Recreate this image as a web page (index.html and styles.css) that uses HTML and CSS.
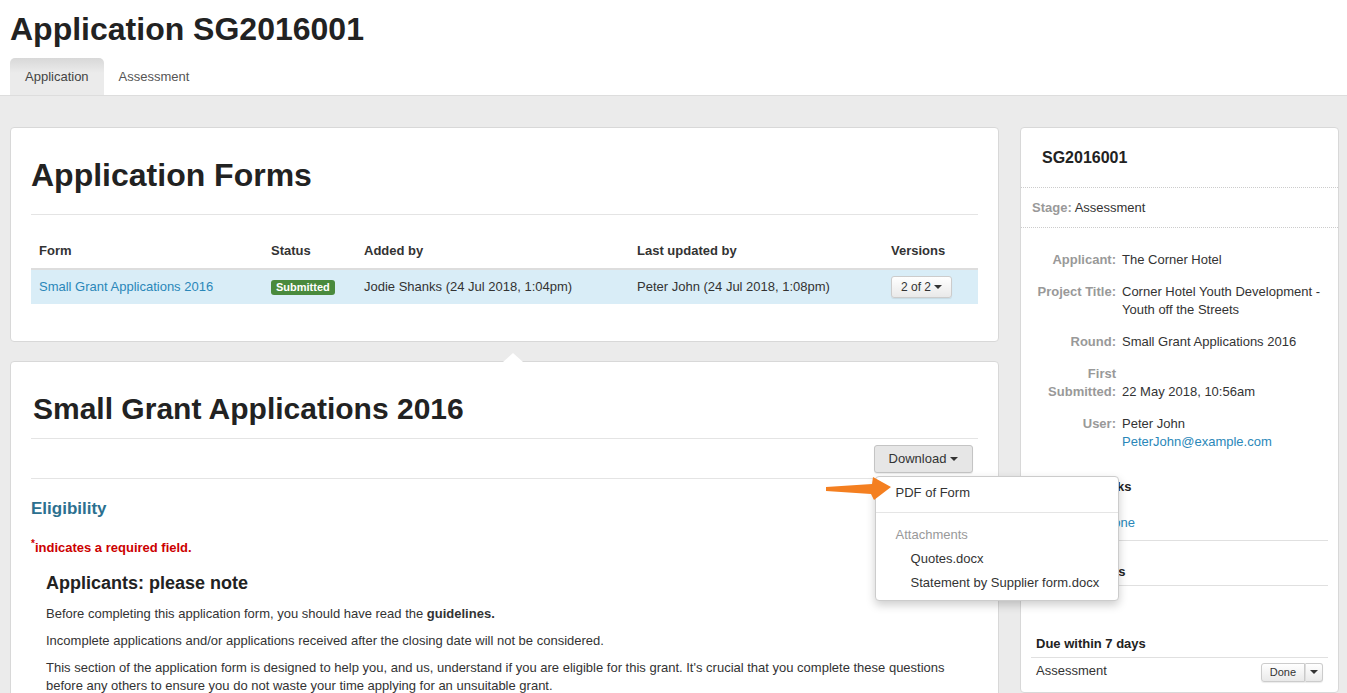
FILE: index.html
```html
<!DOCTYPE html>
<html lang="en">
<head>
	<meta charset="UTF-8">
	<title>Application SG2016001</title>
	<link rel="stylesheet" href="styles.css">
</head>
<body>
	<div class="top">
		<h1 class="page-title">Application SG2016001</h1>
		<ul class="tabs">
			<li class="tab active">Application</li>
			<li class="tab">Assessment</li>
		</ul>
	</div>
	<div class="main">
		<div class="content">
			<!-- forms list -->
			<div class="card forms">
				<h1 class="card-title">Application Forms</h1>
				<table class="table">
					<thead>
						<tr>
							<th class="c-form">Form</th>
							<th class="c-status">Status</th>
							<th class="c-added">Added by</th>
							<th class="c-updated">Last updated by</th>
							<th>Versions</th>
						</tr>
					</thead>
					<tbody>
						<tr class="info">
							<td><a href="#">Small Grant Applications 2016</a></td>
							<td><span class="label">Submitted</span></td>
							<td>Jodie Shanks (24 Jul 2018, 1:04pm)</td>
							<td>Peter John (24 Jul 2018, 1:08pm)</td>
							<td><span class="btn btn-sm">2 of 2 <span class="caret"></span></span></td>
						</tr>
					</tbody>
				</table>
			</div>
			<!-- form view -->
			<div class="card form-view">
				<span class="pointer"></span>
				<h2 class="form-title">Small Grant Applications 2016</h2>
				<div class="toolbar">
					<div class="dropdown">
						<span class="btn btn-dl">Download <span class="caret"></span></span>
						<svg class="arrow" width="66" height="25" viewBox="0 0 66 25">
							<path d="M0 10 L46 7 L47 0 L65 10 L48 23 L45 17 L0 14 Z" fill="#f47f20"/>
						</svg>
						<ul class="menu">
							<li class="item">PDF of Form</li>
							<li class="divider"></li>
							<li class="menu-head">Attachments</li>
							<li class="item sub">Quotes.docx</li>
							<li class="item sub">Statement by Supplier form.docx</li>
						</ul>
					</div>
				</div>
				<h3 class="section">Eligibility</h3>
				<p class="required"><sup>*</sup>indicates a required field.</p>
				<div class="note">
					<h4>Applicants: please note</h4>
					<p>Before completing this application form, you should have read the <b>guidelines.</b></p>
					<p>Incomplete applications and/or applications received after the closing date will not be considered.</p>
					<p>This section of the application form is designed to help you, and us, understand if you are eligible for this grant. It's crucial that you complete these questions before any others to ensure you do not waste your time applying for an unsuitable grant.</p>
				</div>
			</div>
		</div>
		<!-- sidebar -->
		<div class="card side">
			<div class="side-head">SG2016001</div>
			<div class="side-stage"><b>Stage:</b> Assessment</div>
			<dl class="details">
				<dt>Applicant:</dt><dd>The Corner Hotel</dd>
				<dt>Project Title:</dt><dd>Corner Hotel Youth Development - Youth off the Streets</dd>
				<dt>Round:</dt><dd>Small Grant Applications 2016</dd>
				<dt>First Submitted:</dt><dd class="low">22 May 2018, 10:56am</dd>
				<dt>User:</dt><dd>Peter John<br><a href="#">PeterJohn@example.com</a></dd>
			</dl>
			<div class="tasks">
				<h5>Assigned tasks</h5>
				<div class="task-link"><a href="#">Show tasks done</a></div>
				<h5 class="ruled">Overdue tasks</h5>
				<div class="task-row">No tasks</div>
				<h5 class="ruled due">Due within 7 days</h5>
				<div class="task-row">
					<span>Assessment</span>
					<span class="group"><span class="btn btn-xs">Done</span><span class="btn btn-xs"><span class="caret"></span></span></span>
				</div>
			</div>
		</div>
	</div>
</body>
</html>
```

FILE: styles.css
```css
*{margin:0;padding:0;box-sizing:border-box;}
body {
	font-family: "Liberation Sans", Arial, sans-serif;
	font-size: 13px;
	line-height: 18px;
	color: #333;
	background: #ebebeb;
}
a {
	color: #2a87b9;
	text-decoration: none;
}
ul {
	list-style: none;
}
.top {
	background: #fff;
	padding: 10px 10px 0;
	border-bottom: 1px solid #ddd;
}
.page-title {
	font-size: 32px;
	line-height: 38px;
	color: #222;
	margin-bottom: 10px;
}
.tabs {
	display: flex;
}
.tab {
	padding: 10px 15px 9px;
	color: #555;
	font-size: 13px;
}
.active {
	background: linear-gradient(#d8d8d8, #ebebeb 40%);
	border-radius: 5px 5px 0 0;
	color: #444;
}
.main {
	display: flex;
	gap: 21px;
	padding: 31px 8px 20px 10px;
}
.content {
	width: 989px;
	flex-shrink: 0;
	display: flex;
	flex-direction: column;
	gap: 19px;
}
.card {
	background: #fff;
	border: 1px solid #d8d8d8;
	border-radius: 4px;
	position: relative;
}
.forms {
	padding: 27px 20px 37px;
}
.card-title {
	font-size: 32px;
	line-height: 40px;
	color: #222;
	padding-bottom: 19px;
	border-bottom: 1px solid #e4e4e4;
	margin-bottom: 17px;
}
.table {
	width: 100%;
	border-collapse: collapse;
}
.table th {
	text-align: left;
	padding: 10px 8px 8px;
	font-size: 13px;
	color: #333;
	border-bottom: 2px solid #ddd;
}
.table td {
	padding: 6px 8px 6px;
	vertical-align: middle;
}
.c-form { width: 232px; }
.c-status { width: 93px; }
.c-added { width: 273px; }
.c-updated { width: 254px; }
.info td {
	background: #d9edf7;
	border-top: 1px solid #ddd;
}
.label {
	display: inline-block;
	background: #4a8a3d;
	color: #fff;
	font-weight: bold;
	font-size: 11px;
	line-height: 13px;
	padding: 1px 5px 1px;
	border-radius: 3px;
}
.btn {
	display: inline-block;
	border: 1px solid #ccc;
	border-radius: 3px;
	background: linear-gradient(#fff, #e9e9e9);
	color: #333;
	box-shadow: 0 1px 1px rgba(0,0,0,.08);
}
.btn-sm {
	font-size: 12px;
	line-height: 16px;
	padding: 2px 9px;
}
.caret {
	display: inline-block;
	width: 0;
	height: 0;
	border-left: 4px solid transparent;
	border-right: 4px solid transparent;
	border-top: 4px solid #333;
	vertical-align: middle;
	margin-top: -2px;
}
.form-view {
	padding: 18px 20px 60px;
}
.pointer {
	position: absolute;
	top: -9px;
	left: 492px;
	width: 0;
	height: 0;
	border-left: 10px solid transparent;
	border-right: 10px solid transparent;
	border-bottom: 9px solid #fff;
}
.form-title {
	font-size: 30px;
	line-height: 40px;
	color: #222;
	padding: 9px 0 9px 2px;
	border-bottom: 1px solid #e4e4e4;
}
.toolbar {
	display: flex;
	justify-content: flex-end;
	padding: 6px 5px 5px 0;
	border-bottom: 1px solid #e4e4e4;
}
.dropdown {
	position: relative;
}
.btn-dl {
	font-size: 13px;
	line-height: 18px;
	padding: 4px 14px;
	background: #e6e6e6;
	border-color: #c4c4c4;
}
.arrow {
	position: absolute;
	left: -48px;
	top: 32px;
	z-index: 6;
}
.menu {
	position: absolute;
	top: 31px;
	left: 1px;
	width: 244px;
	white-space: nowrap;
	background: #fff;
	border: 1px solid #ccc;
	border-radius: 4px;
	box-shadow: 0 4px 10px rgba(0,0,0,.2);
	padding: 4px 0 5px;
	z-index: 5;
}
.item {
	padding: 3px 20px;
	color: #333;
	font-size: 13px;
}
.item.sub {
	padding-left: 35px;
}
.divider {
	height: 1px;
	background: #e5e5e5;
	margin: 7px 0 10px;
}
.menu-head {
	padding: 3px 20px;
	color: #999;
}
.section {
	font-size: 17px;
	line-height: 22px;
	color: #2c708f;
	margin-top: 19px;
}
.required {
	color: #c00;
	font-weight: bold;
	margin-top: 19px;
}
.required sup {
	font-size: 10px;
	line-height: 0;
}
.note {
	padding: 0 15px;
}
.note h4 {
	font-size: 18px;
	line-height: 24px;
	color: #222;
	margin: 14px 0 10px;
}
.note p {
	margin-bottom: 9px;
}
.side {
	width: 319px;
	flex-shrink: 0;
	align-self: flex-start;
	padding-bottom: 10px;
}
.side-head {
	font-size: 16px;
	font-weight: bold;
	color: #222;
	padding: 21px 21px 20px;
	border-bottom: 1px dotted #ccc;
}
.side-stage {
	padding: 11px 11px 10px;
	border-bottom: 1px dotted #ccc;
}
.side-stage b, .details dt {
	color: #999;
}
.details {
	display: grid;
	grid-template-columns: 84px 1fr;
	column-gap: 6px;
	row-gap: 14px;
	padding: 23px 10px 0 11px;
}
.details dt {
	text-align: right;
	font-weight: bold;
}
.details .low {
	align-self: end;
}
.tasks {
	padding: 27px 10px 0;
}
.tasks h5 {
	font-size: 13px;
	color: #222;
	padding-left: 5px;
	line-height: 18px;
}
.task-link {
	padding: 18px 5px 8px;
	border-bottom: 1px solid #e0e0e0;
}
.ruled {
	margin-top: 22px;
	padding-bottom: 4px;
	border-bottom: 1px solid #e0e0e0;
}
.due {
	margin-top: 29px;
	color: #333;
}
.task-row {
	display: flex;
	justify-content: space-between;
	align-items: center;
	padding: 2px 5px 0;
}
.group {
	display: flex;
	margin-top: 3px;
}
.btn-xs {
	font-size: 11px;
	line-height: 17px;
	padding: 0 8px;
	border-radius: 0;
}
.group .btn-xs:first-child {
	border-radius: 3px 0 0 3px;
}
.group .btn-xs:last-child {
	border-radius: 0 3px 3px 0;
	border-left-color: #ddd;
	padding: 0 4px;
}
```
